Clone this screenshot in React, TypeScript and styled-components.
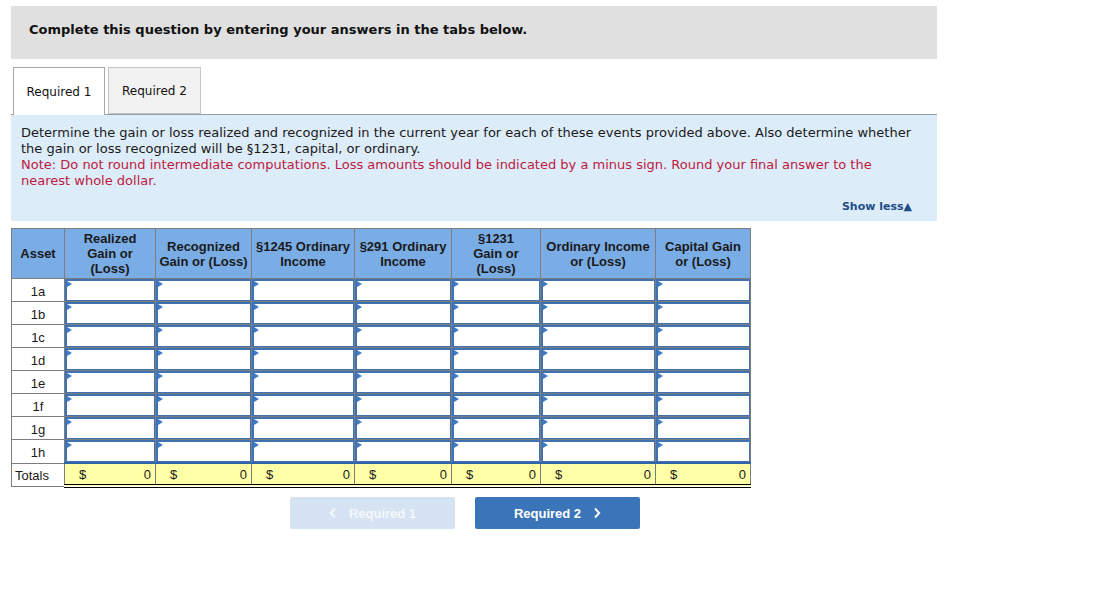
import React from "react";
import styled, { createGlobalStyle } from "styled-components";

const Global = createGlobalStyle`
  html, body { margin: 0; padding: 0; background: #ffffff; }
  body { font-family: "DejaVu Sans", Verdana, sans-serif; color: #1a1a1a; }
  * { box-sizing: border-box; }
`;

const Page = styled.div`
  width: 1096px;
  padding: 6px 0 0 11px;
`;

const Frame = styled.div`
  width: 926px;
`;

const Banner = styled.div`
  height: 53px;
  background: #e0e0e0;
  display: flex;
  align-items: center;
  padding: 0 0 7px 18px;
  font-weight: bold;
  font-size: 13px;
  color: #111111;
`;

const TabBar = styled.div`
  display: flex;
  gap: 3px;
  margin-top: 8px;
  padding-left: 2px;
  border-bottom: 1px solid #9a9a9a;
  height: 48px;
`;

const Tab = styled.div<{ $active?: boolean }>`
  width: ${(p) => (p.$active ? "92px" : "93px")};
  height: ${(p) => (p.$active ? "48px" : "47px")};
  display: flex;
  align-items: center;
  justify-content: center;
  font-size: 12px;
  color: #111111;
  background: ${(p) => (p.$active ? "#ffffff" : "#f2f2f2")};
  border: 1px solid ${(p) => (p.$active ? "#a8a8a8" : "#c4c4c4")};
  border-bottom: ${(p) => (p.$active ? "none" : "1px solid #c4c4c4")};
  padding-top: 1px;
  position: relative;
  z-index: ${(p) => (p.$active ? 1 : 0)};
`;

const Panel = styled.div`
  background: #dcecf9;
  padding: 10px 10px 0 10px;
  height: 106px;
  display: flex;
  flex-direction: column;
`;

const Instr = styled.div`
  font-size: 13px;
  line-height: 16px;
  color: #1a1a1a;
`;

const Note = styled.span`
  color: #bf1a3e;
`;

const ShowLess = styled.div`
  margin-top: auto;
  align-self: flex-end;
  margin-right: 15px;
  margin-bottom: 8px;
  font-size: 11px;
  font-weight: bold;
  color: #1f4d86;
`;

const Grid = styled.table`
  margin-top: 7px;
  border-collapse: collapse;
  font-family: "Liberation Sans", Arial, sans-serif;
  font-size: 13px;
  color: #1a1a1a;
`;

const Th = styled.th<{ $w: number }>`
  width: ${(p) => p.$w}px;
  height: 50px;
  background: #7aade6;
  border: 1px solid #7d7d7d;
  font-weight: bold;
  line-height: 15px;
  padding: 0 2px;
  text-align: center;
  vertical-align: middle;
`;

const Label = styled.td`
  height: 23px;
  border: 1px solid #7d7d7d;
  text-align: center;
  padding: 2px 0 0 0;
  background: #ffffff;
`;

const InputCell = styled.td`
  height: 23px;
  border: 1px solid #7d7d7d;
  padding: 0;
  position: relative;
  background: #ffffff;
`;

const Field = styled.div`
  height: 22px;
  border: 1px solid #3f72b3;
  border-width: 2px 1px 1px 2px;
  background: #ffffff;
`;

const Flag = styled.span`
  position: absolute;
  left: 2px;
  top: 2px;
  width: 0;
  height: 0;
  border-top: 3px solid transparent;
  border-bottom: 3px solid transparent;
  border-left: 5px solid #3d7bc7;
`;

const TotalLabel = styled.td`
  height: 23px;
  border: 1px solid #7d7d7d;
  text-align: left;
  padding: 1px 0 0 3px;
  background: #ffffff;
`;

const TotalCell = styled.td`
  height: 23px;
  background: #ffffa8;
  border-left: 1px solid #7d7d7d;
  border-right: 1px solid #7d7d7d;
  border-top: 2px solid #2f64a8;
  border-bottom: 4px double #000000;
  padding: 1px 4px 0 14px;
`;

const TotalInner = styled.div`
  display: flex;
  justify-content: space-between;
  align-items: center;
`;

const Buttons = styled.div`
  display: flex;
  gap: 20px;
  margin-top: 9px;
  margin-left: 279px;
`;

const NavButton = styled.div<{ $disabled?: boolean }>`
  width: 165px;
  height: 32px;
  border-radius: 2px;
  display: flex;
  align-items: center;
  justify-content: center;
  gap: 12px;
  font-family: "Liberation Sans", Arial, sans-serif;
  font-weight: bold;
  font-size: 13px;
  color: ${(p) => (p.$disabled ? "#f4f7fb" : "#ffffff")};
  background: ${(p) => (p.$disabled ? "#d6e3f2" : "#3a75ba")};
`;

const Chevron = ({ dir }: { dir: "l" | "r" }) => (
  <svg width="8" height="12" viewBox="0 0 8 12" fill="none">
    <polyline
      points={dir === "l" ? "6,1.5 1.8,6 6,10.5" : "2,1.5 6.2,6 2,10.5"}
      stroke="currentColor"
      strokeWidth="2"
    />
  </svg>
);

const cols: { w: number; label: React.ReactNode }[] = [
  { w: 53, label: "Asset" },
  { w: 91, label: <>Realized<br />Gain or<br />(Loss)</> },
  { w: 96, label: <>Recognized<br />Gain or (Loss)</> },
  { w: 103, label: <>§1245 Ordinary<br />Income</> },
  { w: 97, label: <>§291 Ordinary<br />Income</> },
  { w: 89, label: <>§1231<br />Gain or<br />(Loss)</> },
  { w: 115, label: <>Ordinary Income<br />or (Loss)</> },
  { w: 95, label: <>Capital Gain<br />or (Loss)</> },
];

const assets = ["1a", "1b", "1c", "1d", "1e", "1f", "1g", "1h"];

export default function App() {
  return (
    <>
      <Global />
      <Page>
        <Frame>
          <Banner>Complete this question by entering your answers in the tabs below.</Banner>
          <TabBar>
            <Tab $active>Required 1</Tab>
            <Tab>Required 2</Tab>
          </TabBar>
          <Panel>
            <Instr>
              Determine the gain or loss realized and recognized in the current year for each of these events provided above. Also determine whether
              <br />
              the gain or loss recognized will be §1231, capital, or ordinary.
              <br />
              <Note>
                Note: Do not round intermediate computations. Loss amounts should be indicated by a minus sign. Round your final answer to the
                <br />
                nearest whole dollar.
              </Note>
            </Instr>
            <ShowLess>Show less▲</ShowLess>
          </Panel>
        </Frame>
        <Grid>
          <thead>
            <tr>
              {cols.map((c, i) => (
                <Th key={i} $w={c.w}>{c.label}</Th>
              ))}
            </tr>
          </thead>
          <tbody>
            {assets.map((a) => (
              <tr key={a}>
                <Label>{a}</Label>
                {cols.slice(1).map((_, i) => (
                  <InputCell key={i}>
                    <Field />
                    <Flag />
                  </InputCell>
                ))}
              </tr>
            ))}
            <tr>
              <TotalLabel>Totals</TotalLabel>
              {cols.slice(1).map((_, i) => (
                <TotalCell key={i}>
                  <TotalInner>
                    <span>$</span>
                    <span>0</span>
                  </TotalInner>
                </TotalCell>
              ))}
            </tr>
          </tbody>
        </Grid>
        <Buttons>
          <NavButton $disabled>
            <Chevron dir="l" />
            <span>Required 1</span>
          </NavButton>
          <NavButton>
            <span>Required 2</span>
            <Chevron dir="r" />
          </NavButton>
        </Buttons>
      </Page>
    </>
  );
}
